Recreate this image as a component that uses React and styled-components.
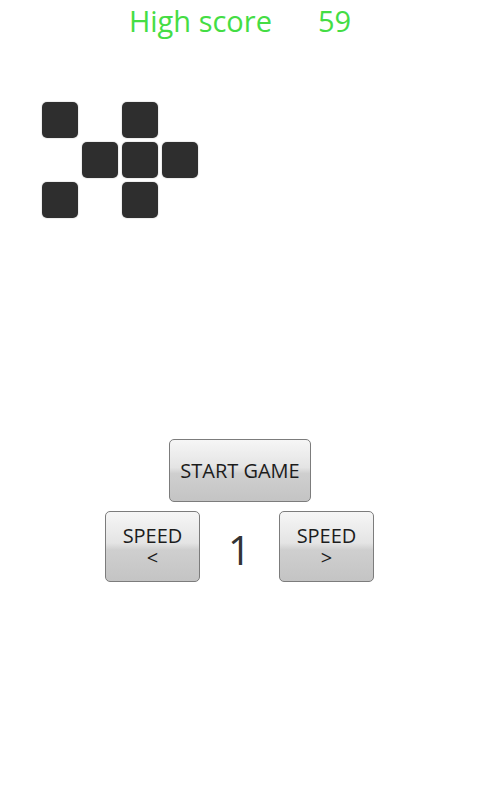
import React from 'react';
import styled, { createGlobalStyle } from 'styled-components';

const Global = createGlobalStyle`
  html, body {
    margin: 0;
    padding: 0;
    background: #ffffff;
  }
  body {
    font-family: "Open Sans", "Noto Sans", "DejaVu Sans", sans-serif;
  }
`;

const Screen = styled.div`
  width: 480px;
  height: 800px;
  display: flex;
  flex-direction: column;
  background: #fff;
`;

const Header = styled.div`
  display: flex;
  justify-content: center;
  gap: 46px;
  color: #44dd44;
  font-size: 29px;
  line-height: 42px;
`;

const Board = styled.div`
  display: grid;
  grid-template-columns: repeat(4, 36px);
  grid-auto-rows: 36px;
  gap: 4px;
  margin: 60px 0 0 42px;
`;

const Cell = styled.div`
  border-radius: 5px;
  background: ${props => (props.on ? '#2e2e2e' : 'transparent')};
  box-shadow: ${props => (props.on ? '0 0 1px 1px rgba(0,0,0,0.08)' : 'none')};
`;

const Controls = styled.div`
  display: flex;
  flex-direction: column;
  align-items: center;
  gap: 9px;
  margin-top: 221px;
`;

const Button = styled.button`
  width: ${props => props.w}px;
  height: ${props => props.h}px;
  border: 1px solid #7c7c7c;
  border-radius: 5px;
  background: linear-gradient(to bottom, #f6f6f6 0%, #e4e4e4 45%, #cfcfcf 55%, #c4c4c4 100%);
  font-family: "Open Sans", "Noto Sans", sans-serif;
  font-size: 20px;
  line-height: 22px;
  color: #1c1c1c;
  padding: 0;
  display: flex;
  flex-direction: column;
  align-items: center;
  justify-content: center;
`;

const Line = styled.div`
  display: block;
  height: 22px;
  line-height: 22px;
`;

const SpeedRow = styled.div`
  display: flex;
  align-items: center;
  margin-left: -1px;
`;

const SpeedValue = styled.div`
  width: 79px;
  text-align: center;
  font-size: 40px;
  color: #333;
  padding-top: 6px;
`;

const layout = [
  [1, 0, 1, 0],
  [0, 1, 1, 1],
  [1, 0, 1, 0],
];

export default function App() {
  return (
    <Screen>
      <Global />
      <Header>
        <span>High score</span>
        <span>59</span>
      </Header>
      <Board>
        {layout.flat().map((v, i) => (
          <Cell key={i} on={v ? 1 : 0} />
        ))}
      </Board>
      <Controls>
        <Button w={142} h={63}>START GAME</Button>
        <SpeedRow>
          <Button w={95} h={71}>
            <Line>SPEED</Line>
            <Line>&lt;</Line>
          </Button>
          <SpeedValue>1</SpeedValue>
          <Button w={95} h={71}>
            <Line>SPEED</Line>
            <Line>&gt;</Line>
          </Button>
        </SpeedRow>
      </Controls>
    </Screen>
  );
}
